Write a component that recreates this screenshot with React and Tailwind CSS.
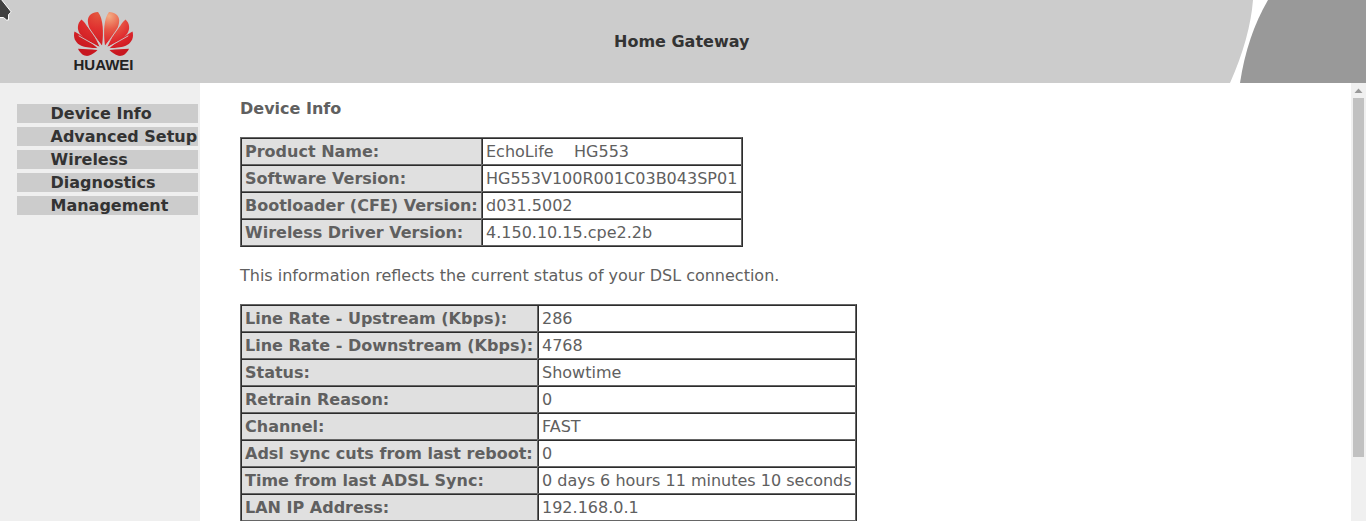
const menu = ["Device Info", "Advanced Setup", "Wireless", "Diagnostics", "Management"];

const device = [
  ["Product Name:", "EchoLife\u00a0\u00a0\u00a0\u00a0HG553"],
  ["Software Version:", "HG553V100R001C03B043SP01"],
  ["Bootloader (CFE) Version:", "d031.5002"],
  ["Wireless Driver Version:", "4.150.10.15.cpe2.2b"],
];

const dsl = [
  ["Line Rate - Upstream (Kbps):", "286"],
  ["Line Rate - Downstream (Kbps):", "4768"],
  ["Status:", "Showtime"],
  ["Retrain Reason:", "0"],
  ["Channel:", "FAST"],
  ["Adsl sync cuts from last reboot:", "0"],
  ["Time from last ADSL Sync:", "0 days 6 hours 11 minutes 10 seconds"],
  ["LAN IP Address:", "192.168.0.1"],
];

const halfPetals = [
  "M102 45.500C103.800 33 103.200 18 98 12C92 12.300 87.800 15.500 87.800 21C88 29 95 38 102 45.500Z",
  "M99.500 46.800C95 36 87.500 25 81.500 19.500C77.500 23 76.500 29 80 34C84 39 92 43.500 99.500 46.800Z",
  "M97.500 48.200C90.500 41.500 81 35 74.500 31.500C73 37 75 42 79.500 44.800C84 47.500 91 48.200 97.500 48.200Z",
  "M97.500 50C91 49.400 84 48.900 78 48.700C80.500 54 84.500 56.500 88.500 55.800C92 55 95.500 52 97.500 50Z",
];

function Logo() {
  return (
    <svg className="ml-[73px] mt-[10px] block h-[64px] w-[61px]" viewBox="73 10 61 64">
      <defs>
        <radialGradient id="petalLeft" gradientUnits="userSpaceOnUse" cx="98" cy="14" r="38">
          <stop offset="0" stopColor="#e4573f" />
          <stop offset="0.4" stopColor="#e0302f" />
          <stop offset="1" stopColor="#c8161f" />
        </radialGradient>
        <radialGradient id="petalRight" gradientUnits="userSpaceOnUse" cx="98" cy="16" r="38">
          <stop offset="0" stopColor="#f4ad84" />
          <stop offset="0.35" stopColor="#e75a47" />
          <stop offset="0.7" stopColor="#de262c" />
          <stop offset="1" stopColor="#c8161f" />
        </radialGradient>
      </defs>
      <g fill="url(#petalLeft)">
        {halfPetals.map((d) => (
          <path key={d} d={d} />
        ))}
      </g>
      <g fill="url(#petalRight)" transform="matrix(-1 0 0 1 207 0)">
        {halfPetals.map((d) => (
          <path key={d} d={d} />
        ))}
      </g>
      <g stroke="#ccc" strokeWidth="0.900" strokeLinecap="round">
        <path d="M102.200 46.800L86 24" />
        <path d="M100 47.900L79 36" />
        <path d="M99 49.100L78 47.300" />
        <path d="M104.800 46.800L121 24" />
        <path d="M107 47.900L128 36" />
        <path d="M108 49.100L129 47.300" />
      </g>
      <text x="73.500" y="70.200" textLength="60" lengthAdjust="spacingAndGlyphs" fill="#222" className="font-['Liberation_Sans'] text-[14.5px] font-bold">
        HUAWEI
      </text>
    </svg>
  );
}

function InfoTable({ rows, labelWidth, valueWidth }) {
  return (
    <div className="w-fit border border-t-[#666] border-l-[#666] border-r-[#2c2c2c] border-b-[#2c2c2c]">
      <div className="w-fit border border-t-[#2c2c2c] border-l-[#2c2c2c] border-r-[#666] border-b-[#666]">
        {rows.map(([label, value], i) => (
          <div key={label} className={i ? "flex h-[27px] border-t border-[#666]" : "flex h-[25px]"}>
            <div className={`${labelWidth} ${i ? "border-t border-t-[#2c2c2c]" : ""} bg-[#e0e0e0] pl-[3px] leading-[25px] font-bold whitespace-nowrap`}>
              {label}
            </div>
            <div className="w-px bg-[#666]" />
            <div className={`${valueWidth} ${i ? "border-t border-t-[#2c2c2c]" : ""} border-l border-l-[#2c2c2c] pl-[3px] leading-[25px] whitespace-nowrap`}>
              {value}
            </div>
          </div>
        ))}
      </div>
    </div>
  );
}

export default function App() {
  return (
    <div className="relative flex h-[521px] w-[1366px] flex-col overflow-hidden bg-white font-['DejaVu_Sans',sans-serif] text-[16px] text-[#606060]">
      <header className="relative flex h-[83px] shrink-0 bg-[#ccc]">
        <Logo />
        <h1 className="ml-[480px] mt-[30px] leading-[24px] text-[16px] font-bold whitespace-nowrap text-[#333]">Home Gateway</h1>
        <svg className="absolute top-0 right-0 h-[83px] w-[138px]" viewBox="0 0 138 83">
          <path d="M25 0Q22 38 2 83H138V0Z" fill="#fff" />
          <path d="M40 0Q19 36 12 83H138V0Z" fill="#999" />
        </svg>
      </header>
      <div className="flex min-h-0 flex-1">
        <nav className="flex w-[200px] shrink-0 flex-col gap-1 bg-[#efefef] pt-[21px] pl-[17px]">
          {menu.map((item) => (
            <a key={item} className="h-[19px] w-[181px] bg-[#ccc] pl-[33.5px] leading-[19px] font-bold whitespace-nowrap text-[#333]">
              {item}
            </a>
          ))}
        </nav>
        <main className="min-w-0 flex-1 overflow-hidden pt-4 pl-10">
          <h2 className="mb-[19px] h-[19px] leading-[19px] font-bold">Device Info</h2>
          <InfoTable rows={device} labelWidth="w-[239px]" valueWidth="w-[259px]" />
          <p className="mt-[19px] mb-[19px] h-[19px] leading-[19px]">This information reflects the current status of your DSL connection.</p>
          <InfoTable rows={dsl} labelWidth="w-[295px]" valueWidth="w-[317px]" />
        </main>
        <div className="flex w-[15px] shrink-0 flex-col items-center bg-[#f0f0f0]">
          <svg className="h-[15px] w-[15px] shrink-0" viewBox="0 0 15 15">
            <path d="M3.500 10L7.500 5.500L11.500 10Z" fill="#999" />
          </svg>
          <div className="h-[359px] w-[11px] bg-[#c1c1c1]" />
        </div>
      </div>
      <svg className="absolute top-0 left-0 h-[22px] w-[14px]" viewBox="0 0 14 22">
        <path d="M-1 -1H1L11.300 12L8.500 14.500V20H6.500L3.500 17.500H-1Z" fill="#404040" stroke="#fff" strokeWidth="1" />
      </svg>
    </div>
  );
}
